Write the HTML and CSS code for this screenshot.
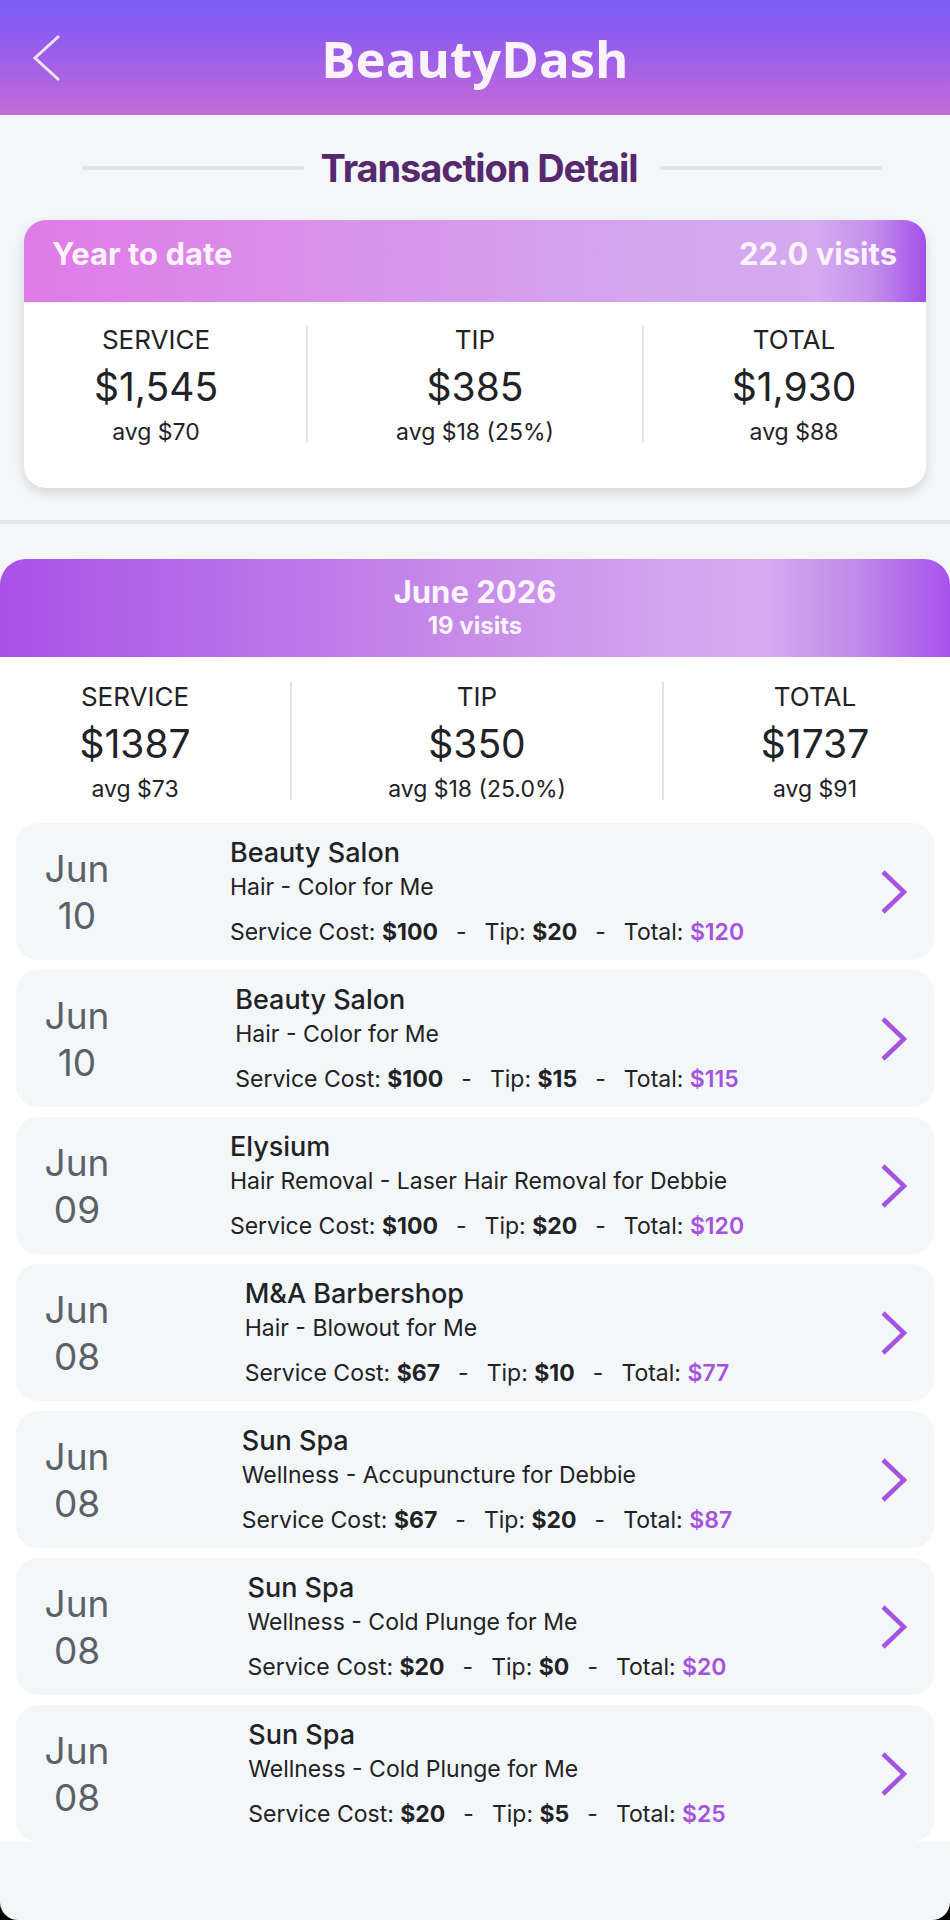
FILE: index.html
```html
<!DOCTYPE html>
<html lang="en">
<head>
    <meta charset="UTF-8">
    <meta name="viewport" content="width=device-width, initial-scale=1.0">
    <title>BeautyDash - Transaction Detail</title>
    <link rel="stylesheet" href="styles.css">
</head>
<body>
<div class="app">
    <header class="topbar">
        <svg class="back" viewBox="0 0 30 48"><polyline points="27,2 3,24 27,46"/></svg>
        <h1>BeautyDash</h1>
        <span></span>
    </header>

    <div class="page-title">
        <span class="rule"></span>
        <h2>Transaction Detail</h2>
        <span class="rule"></span>
    </div>

    <section class="ytd">
        <div class="ytd-band">
            <span>Year to date</span>
            <span>22.0 visits</span>
        </div>
        <div class="stats">
            <div class="stat first">
                <div class="label">SERVICE</div>
                <div class="value">$1,545</div>
                <div class="avg">avg $70</div>
            </div>
            <span class="divider"></span>
            <div class="stat">
                <div class="label">TIP</div>
                <div class="value">$385</div>
                <div class="avg">avg $18 (25%)</div>
            </div>
            <span class="divider"></span>
            <div class="stat last">
                <div class="label">TOTAL</div>
                <div class="value">$1,930</div>
                <div class="avg">avg $88</div>
            </div>
        </div>
    </section>

    <div class="split"></div>

    <section class="month">
        <div class="month-band">
            <div class="name">June 2026</div>
            <div class="count">19 visits</div>
        </div>
        <div class="month-body">
            <div class="stats">
                <div class="stat first">
                    <div class="label">SERVICE</div>
                    <div class="value">$1387</div>
                    <div class="avg">avg $73</div>
                </div>
                <span class="divider"></span>
                <div class="stat">
                    <div class="label">TIP</div>
                    <div class="value">$350</div>
                    <div class="avg">avg $18 (25.0%)</div>
                </div>
                <span class="divider"></span>
                <div class="stat last">
                    <div class="label">TOTAL</div>
                    <div class="value">$1737</div>
                    <div class="avg">avg $91</div>
                </div>
            </div>

            <div class="visits">
                <div class="visit">
                    <div class="date">Jun<br>10</div>
                    <div class="info-wrap">
                        <div class="info">
                            <div class="shop">Beauty Salon</div>
                            <div class="kind">Hair - Color for Me</div>
                            <div class="money">Service Cost: <b>$100</b><span class="sep">-</span>Tip: <b>$20</b><span class="sep">-</span>Total: <b class="sum">$120</b></div>
                        </div>
                    </div>
                    <svg class="go" viewBox="0 0 27 46"><polyline points="3,3 24,23 3,43"/></svg>
                </div>
                <div class="visit">
                    <div class="date">Jun<br>10</div>
                    <div class="info-wrap">
                        <div class="info">
                            <div class="shop">Beauty Salon</div>
                            <div class="kind">Hair - Color for Me</div>
                            <div class="money">Service Cost: <b>$100</b><span class="sep">-</span>Tip: <b>$15</b><span class="sep">-</span>Total: <b class="sum">$115</b></div>
                        </div>
                    </div>
                    <svg class="go" viewBox="0 0 27 46"><polyline points="3,3 24,23 3,43"/></svg>
                </div>
                <div class="visit">
                    <div class="date">Jun<br>09</div>
                    <div class="info-wrap">
                        <div class="info">
                            <div class="shop">Elysium</div>
                            <div class="kind">Hair Removal - Laser Hair Removal for Debbie</div>
                            <div class="money">Service Cost: <b>$100</b><span class="sep">-</span>Tip: <b>$20</b><span class="sep">-</span>Total: <b class="sum">$120</b></div>
                        </div>
                    </div>
                    <svg class="go" viewBox="0 0 27 46"><polyline points="3,3 24,23 3,43"/></svg>
                </div>
                <div class="visit">
                    <div class="date">Jun<br>08</div>
                    <div class="info-wrap">
                        <div class="info">
                            <div class="shop">M&amp;A Barbershop</div>
                            <div class="kind">Hair - Blowout for Me</div>
                            <div class="money">Service Cost: <b>$67</b><span class="sep">-</span>Tip: <b>$10</b><span class="sep">-</span>Total: <b class="sum">$77</b></div>
                        </div>
                    </div>
                    <svg class="go" viewBox="0 0 27 46"><polyline points="3,3 24,23 3,43"/></svg>
                </div>
                <div class="visit">
                    <div class="date">Jun<br>08</div>
                    <div class="info-wrap">
                        <div class="info">
                            <div class="shop">Sun Spa</div>
                            <div class="kind">Wellness - Accupuncture for Debbie</div>
                            <div class="money">Service Cost: <b>$67</b><span class="sep">-</span>Tip: <b>$20</b><span class="sep">-</span>Total: <b class="sum">$87</b></div>
                        </div>
                    </div>
                    <svg class="go" viewBox="0 0 27 46"><polyline points="3,3 24,23 3,43"/></svg>
                </div>
                <div class="visit">
                    <div class="date">Jun<br>08</div>
                    <div class="info-wrap">
                        <div class="info">
                            <div class="shop">Sun Spa</div>
                            <div class="kind">Wellness - Cold Plunge for Me</div>
                            <div class="money">Service Cost: <b>$20</b><span class="sep">-</span>Tip: <b>$0</b><span class="sep">-</span>Total: <b class="sum">$20</b></div>
                        </div>
                    </div>
                    <svg class="go" viewBox="0 0 27 46"><polyline points="3,3 24,23 3,43"/></svg>
                </div>
                <div class="visit">
                    <div class="date">Jun<br>08</div>
                    <div class="info-wrap">
                        <div class="info">
                            <div class="shop">Sun Spa</div>
                            <div class="kind">Wellness - Cold Plunge for Me</div>
                            <div class="money">Service Cost: <b>$20</b><span class="sep">-</span>Tip: <b>$5</b><span class="sep">-</span>Total: <b class="sum">$25</b></div>
                        </div>
                    </div>
                    <svg class="go" viewBox="0 0 27 46"><polyline points="3,3 24,23 3,43"/></svg>
                </div>
            </div>
        </div>
    </section>
</div>
</body>
</html>
```

FILE: styles.css
```css
* {
    box-sizing: border-box;
}
body {
    margin: 0;
    background: #000;
    font-family: Inter, "Noto Sans", sans-serif;
    color: #1f2226;
}
.app {
    width: 950px;
    height: 1920px;
    background: #f3f7f8;
    border-radius: 0 0 18px 18px;
    overflow: hidden;
}
.topbar {
    height: 115px;
    display: grid;
    grid-template-columns: 1fr auto 1fr;
    align-items: center;
    background: linear-gradient(180deg, #7a5cf9 0%, #9a5eea 45%, #c46bd6 100%);
}
.back {
    width: 30px;
    height: 48px;
    margin-left: 32px;
}
.back polyline {
    fill: none;
    stroke: #f0e2fa;
    stroke-width: 3;
}
.topbar h1 {
    margin: 0;
    font-family: "Open Sans", sans-serif;
    font-weight: 700;
    font-size: 51px;
    line-height: 60px;
    color: #faf3fd;
}
.page-title {
    display: flex;
    align-items: center;
    gap: 17px;
    padding: 30px 68px 0 82px;
}
.page-title .rule {
    flex: 1;
    height: 4px;
    background: #e1e2e6;
    border-radius: 2px;
}
.page-title h2 {
    margin: 0 6px 0 0;
    font-size: 38px;
    line-height: 46px;
    font-weight: 700;
    color: #56296f;
    letter-spacing: -1.1px;
}
.ytd {
    margin: 29px 24px 0;
    background: #fff;
    border-radius: 22px;
    box-shadow: 0 5px 12px rgba(0, 0, 0, 0.13);
    overflow: hidden;
}
.ytd-band {
    display: flex;
    justify-content: space-between;
    padding: 15px 29px 30px 28px;
    font-size: 31px;
    line-height: 37px;
    font-weight: 700;
    color: #fbf2fd;
    background: linear-gradient(90deg, #e07ae8 0%, #d796ea 40%, #d4a6ee 70%, #d5aaef 88%, #c490ec 94%, #a44fe8 100%);
}
.stats {
    display: grid;
    align-items: start;
}
.ytd .stats {
    grid-template-columns: 282px 2px 334px 2px 1fr;
    padding: 23px 0 41px;
}
.divider {
    width: 2px;
    height: 118px;
    background: #e3e3e3;
}
.stat {
    text-align: center;
}
.stat .label {
    font-size: 26px;
    line-height: 30px;
}
.stat .value {
    font-size: 39px;
    line-height: 46px;
    margin-top: 9px;
}
.stat .avg {
    font-size: 23px;
    line-height: 30px;
    margin-top: 7px;
}
.ytd .first {
    padding-right: 18px;
}
.ytd .last {
    padding-left: 18px;
}
.split {
    height: 4px;
    margin-top: 32px;
    background: #e4e6e9;
}
.month {
    margin-top: 35px;
}
.month-band {
    border-radius: 26px 26px 0 0;
    text-align: center;
    padding: 16px 0 17px;
    color: #fbf3fd;
    font-weight: 700;
    background: linear-gradient(90deg, #a851e8 0%, #b870e9 25%, #c88de9 50%, #d3a3ee 70%, #d8abf0 80%, #c08be9 90%, #a752ea 100%);
}
.month-band .name {
    font-size: 31px;
    line-height: 34px;
}
.month-band .count {
    font-size: 24px;
    line-height: 28px;
    margin-top: 3px;
}
.month-body {
    background: #fff;
    padding-top: 25px;
}
.month .stats {
    grid-template-columns: 290px 2px 370px 2px 1fr;
}
.month .first {
    padding-right: 20px;
}
.month .last {
    padding-left: 16px;
}
.visits {
    display: flex;
    flex-direction: column;
    gap: 10px;
    padding: 19px 16px 0;
}
.visit {
    height: 137px;
    display: flex;
    align-items: center;
    padding-right: 27px;
    background: #f3f7f8;
    border-radius: 22px;
}
.visit .date {
    width: 122px;
    text-align: center;
    font-size: 37px;
    line-height: 47px;
    color: #5a6168;
}
.info-wrap {
    flex: 1;
    display: flex;
    justify-content: center;
}
.shop {
    font-size: 27px;
    line-height: 34px;
    font-weight: 500;
}
.kind {
    font-size: 23px;
    line-height: 30px;
    margin-top: 2px;
}
.money {
    font-size: 23px;
    line-height: 30px;
    margin-top: 15px;
    white-space: nowrap;
}
.money b {
    font-weight: 700;
}
.money .sum {
    font-weight: 600;
    color: #a553dd;
}
.sep {
    margin: 0 18px;
}
.go {
    width: 27px;
    height: 46px;
    margin-left: 44px;
}
.go polyline {
    fill: none;
    stroke: #a553e0;
    stroke-width: 4.5;
}
```
